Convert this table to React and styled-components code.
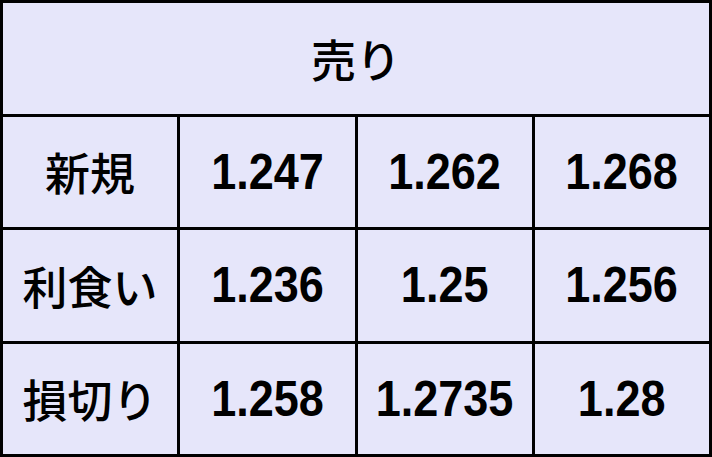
import React from 'react';
import styled, { createGlobalStyle } from 'styled-components';

// Page reset
const GlobalStyle = createGlobalStyle`
  html, body {
    margin: 0;
    padding: 0;
    background: #ffffff;
  }
`;

const rows = [
  { label: '新規', values: ['1.247', '1.262', '1.268'] },
  { label: '利食い', values: ['1.236', '1.25', '1.256'] },
  { label: '損切り', values: ['1.258', '1.2735', '1.28'] }
];

const PriceGrid = styled.div`
  display: grid;
  grid-template-columns: repeat(4, 1fr);
  grid-template-rows: repeat(4, 1fr);
  gap: 3px;
  padding: 3px;
  width: 712px;
  height: 457px;
  box-sizing: border-box;
  background: #000000;
`;

const Cell = styled.div`
  display: flex;
  align-items: center;
  justify-content: center;
  background: #e6e6fa;
  color: #000000;
  grid-column: ${(props) => (props.$span ? `span ${props.$span}` : 'auto')};
`;

const Label = styled.span`
  font-family: "Noto Sans CJK JP", "Noto Sans", sans-serif;
  font-size: 45px;
  font-weight: 500;
  line-height: 1;
`;

const Value = styled.span`
  display: inline-block;
  font-family: "Liberation Sans", Arial, sans-serif;
  font-size: 50px;
  font-weight: 700;
  line-height: 1;
  transform: scaleX(0.9);
`;

const App = () => {
  return (
    <>
      <GlobalStyle />
      <PriceGrid>
        <Cell $span={4}>
          <Label>売り</Label>
        </Cell>
        {rows.map((row) => (
          <React.Fragment key={row.label}>
            <Cell>
              <Label>{row.label}</Label>
            </Cell>
            {row.values.map((value) => (
              <Cell key={value}>
                <Value>{value}</Value>
              </Cell>
            ))}
          </React.Fragment>
        ))}
      </PriceGrid>
    </>
  );
};

export default App;
